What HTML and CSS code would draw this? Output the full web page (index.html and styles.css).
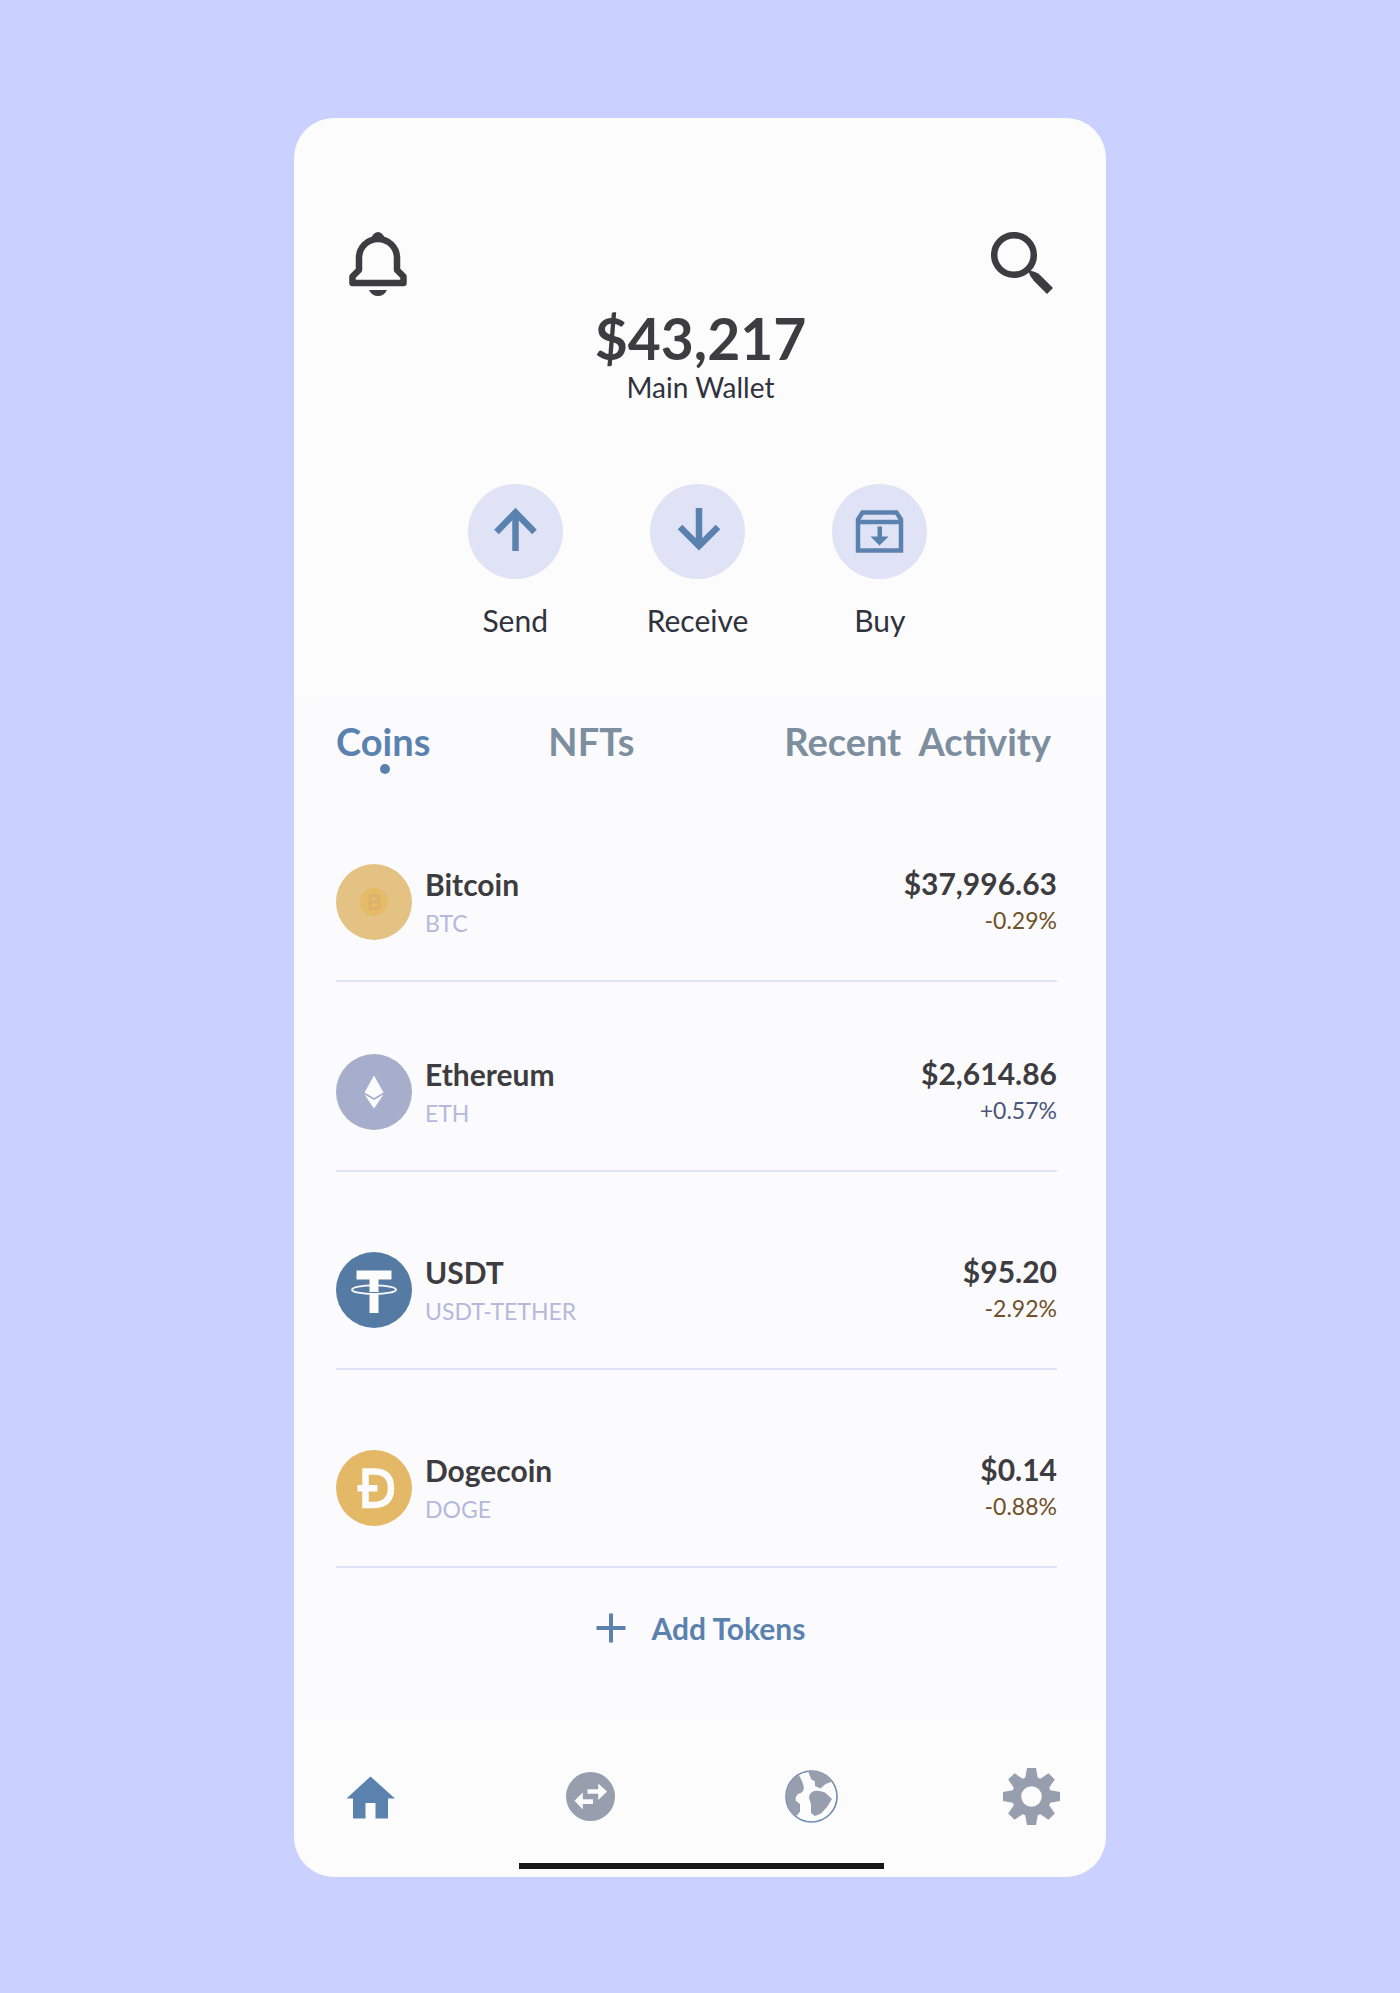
FILE: index.html
```html
<!DOCTYPE html>
<html lang="en">
<head>
<meta charset="utf-8">
<meta name="viewport" content="width=device-width, initial-scale=1">
<title>Main Wallet</title>
<link rel="stylesheet" href="styles.css">
</head>
<body>
<main class="wallet">
  <header class="summary">
    <div class="toolbar">
      <button class="icon-button" type="button" aria-label="Notifications">
        <svg width="64" height="64" viewBox="0 0 64 64" fill="currentColor">
          <path d="M13 26a19 19 0 0 1 38 0V38L57.500 44.500V51H6.500V44.500L13 38Z" fill="none" stroke="currentColor" stroke-width="6.500" stroke-linejoin="round"/>
          <path d="M25 6Q28 0 32 0T39 6Z"/>
          <path d="M23 58H41Q38 64 32 64T23 58Z"/>
        </svg>
      </button>
      <button class="icon-button" type="button" aria-label="Search">
        <svg width="64" height="64" viewBox="0 0 64 64" fill="currentColor">
          <circle cx="23" cy="23" r="19.800" fill="none" stroke="currentColor" stroke-width="6.500"/>
          <path d="M37 38.500Q45 39 49 43L62 56L56 62L43 49Q39 45 37 38.500Z"/>
        </svg>
      </button>
    </div>
    <h1 class="balance">$43,217</h1>
    <p class="wallet-name">Main Wallet</p>
    <div class="actions">
      <button class="action" type="button">
        <svg class="action-icon" viewBox="0 0 95 95" fill="none" stroke="currentColor" stroke-width="6.500"><path d="M28.500 48L47.500 28.500L66.500 48M47.500 27V67" /></svg>
        Send
      </button>
      <button class="action" type="button">
        <svg class="action-icon" viewBox="0 0 95 95" fill="none" stroke="currentColor" stroke-width="6.500"><path d="M30 43L49 62L68 43M49 24V64"/></svg>
        Receive
      </button>
      <button class="action" type="button">
        <svg class="action-icon" viewBox="0 0 95 95" fill="none" stroke="currentColor" stroke-width="4.500"><path d="M26 66.500V35.500L30.500 28.500H64.500L69 35.500V66.500ZM26 38H69"/><path d="M45.500 42.500H50V52.500H56.500L47.500 61.500L38.500 52.500H45.500Z" fill="currentColor" stroke="none"/></svg>
        Buy
      </button>
    </div>
  </header>

  <section class="assets">
    <nav class="tabs" aria-label="Wallet sections">
      <a class="tab tab--active" href="#coins" aria-current="page">Coins</a>
      <a class="tab" href="#nfts">NFTs</a>
      <a class="tab tab--last" href="#activity">Recent&nbsp; Activity</a>
    </nav>
    <ul class="coins" id="coins">
      <li class="coin">
        <svg class="coin-icon" viewBox="0 0 76 76"><circle cx="38" cy="38" r="38" fill="#e3c284"/><circle cx="38" cy="38" r="14" fill="#e5bb68"/><path d="M34 31V45M34 31.500H39.500Q43 31.500 43 34.700T39.500 38H34M39.500 38Q44 38 44 41.300T39.500 44.700H34" fill="none" stroke="#d9b06c" stroke-width="2.500"/></svg>
        <div class="coin-text"><h2 class="coin-name">Bitcoin</h2><p class="coin-code">BTC</p></div>
        <div class="coin-value"><p class="coin-price">$37,996.63</p><p class="coin-change">-0.29%</p></div>
      </li>
      <li class="coin">
        <svg class="coin-icon" viewBox="0 0 76 76"><circle cx="38" cy="38" r="38" fill="#a6aecb"/><path d="M38 21.500L47.500 38.500L38 44L28.500 38.500ZM28.500 40.500L38 46L47.500 40.500L38 54.500Z" fill="#fcfcfd"/></svg>
        <div class="coin-text"><h2 class="coin-name">Ethereum</h2><p class="coin-code">ETH</p></div>
        <div class="coin-value"><p class="coin-price">$2,614.86</p><p class="coin-change coin-change--up">+0.57%</p></div>
      </li>
      <li class="coin coin--spaced">
        <svg class="coin-icon" viewBox="0 0 76 76"><circle cx="38" cy="38" r="38" fill="#557ba5"/><path d="M20.500 18.500H55.500V27.500H42.500V61H33.500V27.500H20.500Z" fill="#fcfcfd"/><path d="M33 40.500H43" stroke="#557ba5"/><ellipse cx="38" cy="37.700" rx="22" ry="4.300" fill="none" stroke="#fcfcfd" stroke-width="1.800"/></svg>
        <div class="coin-text"><h2 class="coin-name">USDT</h2><p class="coin-code">USDT-TETHER</p></div>
        <div class="coin-value"><p class="coin-price">$95.20</p><p class="coin-change">-2.92%</p></div>
      </li>
      <li class="coin coin--spaced">
        <svg class="coin-icon" viewBox="0 0 76 76"><circle cx="38" cy="38" r="38" fill="#e3b866"/><path d="M29.500 21.500H38Q55 21.500 55 38T38 55H29.500ZM21.500 38.300H41.500" fill="none" stroke="#fcfcfd" stroke-width="6.500"/></svg>
        <div class="coin-text"><h2 class="coin-name">Dogecoin</h2><p class="coin-code">DOGE</p></div>
        <div class="coin-value"><p class="coin-price">$0.14</p><p class="coin-change">-0.88%</p></div>
      </li>
    </ul>
    <button class="add" type="button">
      <svg width="30" height="30" viewBox="0 0 30 30" stroke="currentColor" stroke-width="4"><path d="M15 .500V29.500M.500 15H29.500"/></svg>
      Add Tokens
    </button>
  </section>

  <footer class="footer">
    <nav class="bottom-nav" aria-label="Main">
      <a class="nav-link nav-link--active" href="#home" aria-label="Home">
        <svg viewBox="0 0 57 57" fill="currentColor"><path d="M28.500 8.500L53 30.500H46V50.500H33.500V35H23.500V50.500H11V30.500H4.500Z"/></svg>
      </a>
      <a class="nav-link" href="#swap" aria-label="Swap">
        <svg viewBox="0 0 57 57" fill="currentColor"><circle cx="28.500" cy="28.500" r="24.500"/><path d="M25.500 21.200H36.200V15.500L45 23.500L36.200 32V25.800H25.500ZM31 31.300H20.800V24.500L12.500 32.800L20.800 41.500V36H31Z" fill="#fcfcfd"/></svg>
      </a>
      <a class="nav-link" href="#explore" aria-label="Explore">
        <svg viewBox="0 0 57 57" fill="currentColor"><circle cx="28.500" cy="28.500" r="25.500" fill="none" stroke="#6f8cae" stroke-width="1.600"/><path d="M15.800 6.800L19 13Q22 20 20 23T15 26L12.500 29.500L13 33L17 36V43.800L12.500 49A26 26 0 0 1 15.800 6.800ZM25 3L28 11L32 13.500V18L37.500 20.500L42.500 16L49.500 13.500A26 26 0 0 0 25 3ZM31 23Q36 22 42 24.500L49 31L44 39L38 45.500L32 48L28 45V36L26 30Q26 25 31 23Z"/></svg>
      </a>
      <a class="nav-link" href="#settings" aria-label="Settings">
        <svg viewBox="0 0 57 57" fill="currentColor"><circle cx="28.500" cy="28.500" r="15" fill="none" stroke="currentColor" stroke-width="9.400"/><g id="teeth"><path d="M22 11L24 0H33L35 11ZM22 46L24 57H33L35 46ZM11 22L0 24V33L11 35ZM46 22L57 24V33L46 35Z"/></g><use href="#teeth" transform="rotate(45 28.500 28.500)"/></svg>
      </a>
    </nav>
    <div class="home-bar"></div>
  </footer>
</main>
</body>
</html>
```
FILE: styles.css
```css
* {
  box-sizing: border-box;
}

body {
  margin: 0;
  padding: 118px 24px 116px;
  background: #cad0ff;
  color: #3d3c40;
  font-family: Lato, "Open Sans", sans-serif;
}

h1, h2, p, ul {
  margin: 0;
  padding: 0;
}

svg {
  display: block;
  flex-shrink: 0;
}

button {
  padding: 0;
  border: 0;
  background: none;
  color: inherit;
  font: inherit;
  cursor: pointer;
}

a {
  color: inherit;
  text-decoration: none;
}

.wallet {
  max-width: 812px;
  margin: 0 auto;
  border-radius: 40px;
  background: #fcfcfd;
  overflow: hidden;
}

.summary {
  padding: 114px 51px 63px 52px;
  text-align: center;
}

.toolbar {
  display: flex;
  justify-content: space-between;
}

.balance {
  margin-top: 12px;
  font-size: 57px;
  font-weight: 700;
  line-height: 60px;
}

.wallet-name {
  color: #30323c;
  font-size: 28px;
  line-height: 38px;
}

.actions {
  display: flex;
  justify-content: center;
  gap: 84px;
  margin-top: 78px;
  padding-right: 6px;
}

.action {
  display: flex;
  flex-direction: column;
  align-items: center;
  gap: 23px;
  color: #30323c;
  font-size: 30px;
  line-height: 36px;
}

.action-icon {
  width: 95px;
  height: 95px;
  border-radius: 50%;
  background: #e0e2f6;
  color: #5b82ae;
}

.assets {
  padding: 17px 49px 74px 42px;
  background: #fbfbfe;
}

.tabs {
  display: flex;
  margin-bottom: 28px;
  color: #7d8e9f;
  font-size: 38px;
  font-weight: 700;
  line-height: 46px;
}

.tab {
  position: relative;
  margin-right: 118px;
}

.tab--active {
  color: #5b82ae;
}

.tab--active::after {
  content: "";
  position: absolute;
  top: 100%;
  left: 50%;
  width: 10px;
  height: 10px;
  margin-left: -3px;
  border-radius: 50%;
  background: currentColor;
}

.tab--last {
  margin-right: 6px;
  margin-left: auto;
}

.coins {
  list-style: none;
}

.coin {
  display: flex;
  align-items: center;
  gap: 13px;
  padding: 72px 0 40px;
  border-bottom: 2px solid #dfe1f6;
}

.coin--spaced {
  padding-top: 80px;
}

.coin-icon {
  width: 76px;
  height: 76px;
}

.coin-text,
.coin-value {
  display: flex;
  flex-direction: column;
  gap: 6px;
}

.coin-value {
  gap: 4px;
  margin-left: auto;
  padding-bottom: 4px;
  text-align: right;
}

.coin-name,
.coin-price {
  font-size: 30px;
  font-weight: 700;
  line-height: 36px;
}

.coin-code,
.coin-change {
  font-size: 23px;
  line-height: 30px;
}

.coin-code {
  color: #b4b9dc;
}

.coin-change {
  color: #6f5128;
}

.coin-change--up {
  color: #4b5678;
}

.add {
  display: flex;
  align-items: center;
  gap: 26px;
  margin: 42px auto 0;
  padding-left: 8px;
  color: #5b82ae;
  font-size: 30px;
  font-weight: 700;
  line-height: 36px;
}

.footer {
  padding: 48px 46px 8px 48px;
}

.bottom-nav {
  display: flex;
  justify-content: space-between;
  color: #979faf;
}

.nav-link {
  width: 57px;
}

.nav-link--active {
  color: #5b82ae;
}

.home-bar {
  width: 365px;
  max-width: 60%;
  height: 6px;
  margin: 38px auto 0;
  background: #171717;
}
```
